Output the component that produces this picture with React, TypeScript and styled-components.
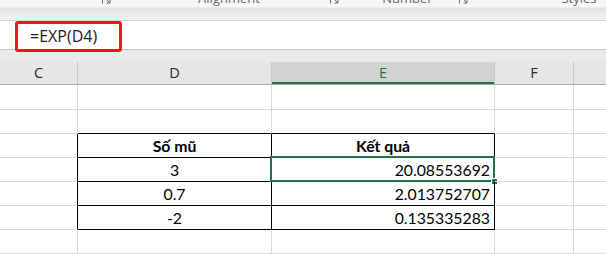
import styled, { createGlobalStyle } from "styled-components";

const GlobalStyle = createGlobalStyle`
  html, body {
    margin: 0;
    padding: 0;
    background: #ffffff;
  }
  body {
    width: 606px;
    height: 254px;
    overflow: hidden;
  }
`;

const GREEN = "#217346";
const GRID = "#d9d9d9";
const INK = "#000000";

type Column = { name: string; width: number };

const columns: Column[] = [
  { name: "C", width: 78 },
  { name: "D", width: 194 },
  { name: "E", width: 223 },
  { name: "F", width: 79 },
  { name: "", width: 80 },
];

const selectedCol = 2;

type Row = { height: number; cells: string[]; bold?: boolean };

const rows: Row[] = [
  { height: 25, cells: [] },
  { height: 24, cells: [] },
  { height: 24, cells: ["", "Số mũ", "Kết quả"], bold: true },
  { height: 24, cells: ["", "3", "20.08553692"] },
  { height: 24, cells: ["", "0.7", "2.013752707"] },
  { height: 24, cells: ["", "-2", "0.135335283"] },
  { height: 24, cells: [] },
];

// table D3:E6 has thin black borders all round
const inTable = (r: number, c: number) => r >= 2 && r <= 5 && c >= 1 && c <= 2;

const ribbonGroups = [
  { label: "", width: 115 },
  { label: "Alignment", width: 228 },
  { label: "Number", width: 129 },
  { label: "Styles", width: 214 },
];

const Sheet = styled.div`
  width: 606px;
  height: 254px;
  overflow: hidden;
  position: relative;
  font-family: "Open Sans", "Noto Sans", sans-serif;
`;

const Ribbon = styled.div`
  height: 20px;
  border-bottom: 1px solid #d4d4d4;
  background: linear-gradient(
    to bottom,
    #f6f6f6 0px,
    #f6f6f6 7px,
    #e2e2e2 8px,
    #eaeaea 14px,
    #f1f1f1 20px
  );
  display: grid;
  grid-template-columns: ${ribbonGroups.map((g) => `${g.width}px`).join(" ")};
  overflow: hidden;
`;

const RibbonGroup = styled.div`
  position: relative;
  height: 7px;
  overflow: hidden;
  display: flex;
  justify-content: center;
  align-items: flex-end;
`;

const GroupLabel = styled.span`
  font-size: 13px;
  line-height: 16px;
  color: #6a6a6a;
  margin-bottom: 1px;
  white-space: nowrap;
`;

const Launcher = styled.svg`
  position: absolute;
  right: 4px;
  bottom: 3px;
`;

const FormulaBar = styled.div`
  position: relative;
  height: 28px;
  background: #ffffff;
  border-bottom: 1px solid #c6c6c6;
  display: flex;
  align-items: center;
  padding-left: 30px;
`;

const FormulaText = styled.span`
  font-size: 16px;
  color: #222222;
  line-height: 20px;
  margin-top: 2px;
`;

const Callout = styled.div`
  position: absolute;
  left: 15px;
  top: 0px;
  width: 107px;
  height: 31px;
  box-sizing: border-box;
  border: 3px solid #f0141c;
  border-radius: 3px;
`;

const Gap = styled.div`
  height: 12px;
  background: #e9e9e9;
`;

const GridRow = styled.div`
  display: flex;
`;

const HeaderCell = styled.div<{ $w: number; $active?: boolean }>`
  width: ${(p) => p.$w}px;
  flex: none;
  height: 23px;
  box-sizing: border-box;
  border-right: 1px solid #c8c8c8;
  border-bottom: 1px solid #ababab;
  background: ${(p) => (p.$active ? "#d2d2d2" : "#e6e6e6")};
  color: ${(p) => (p.$active ? GREEN : "#262626")};
  box-shadow: ${(p) => (p.$active ? `inset 0 -2px 0 ${GREEN}` : "none")};
  font-size: 14.5px;
  line-height: 22px;
  text-align: center;
`;

const Cell = styled.div<{
  $w: number;
  $h: number;
  $right: string;
  $bottom: string;
  $align: "center" | "right";
  $bold?: boolean;
}>`
  position: relative;
  width: ${(p) => p.$w}px;
  height: ${(p) => p.$h}px;
  flex: none;
  box-sizing: border-box;
  border-right: 1px solid ${(p) => p.$right};
  border-bottom: 1px solid ${(p) => p.$bottom};
  display: flex;
  align-items: flex-end;
  justify-content: ${(p) => (p.$align === "right" ? "flex-end" : "center")};
  padding: 0 4px 2px 4px;
  font-family: "Lato", "Carlito", sans-serif;
  font-size: 15.8px;
  font-weight: ${(p) => (p.$bold ? 700 : 400)};
  line-height: 18px;
  color: #000000;
`;

const Selection = styled.span`
  position: absolute;
  left: -2px;
  top: -2px;
  right: -1px;
  bottom: -1px;
  border: 2px solid ${GREEN};
  pointer-events: none;

  &::after {
    content: "";
    position: absolute;
    right: -4px;
    bottom: -4px;
    width: 5px;
    height: 5px;
    background: ${GREEN};
    border: 1px solid #ffffff;
    border-right: none;
    border-bottom: none;
  }
`;

const LauncherIcon = () => (
  <Launcher width="9" height="9" viewBox="0 0 9 9">
    <path d="M0.5 8.5V0.5H8.5" fill="none" stroke="#6a6a6a" strokeWidth="1" />
    <path d="M3 3L8 8M8 4.5V8H4.5" fill="none" stroke="#6a6a6a" strokeWidth="1" />
  </Launcher>
);

export default function App() {
  return (
    <Sheet>
      <GlobalStyle />
      <Ribbon>
        {ribbonGroups.map((g, i) => (
          <RibbonGroup key={i}>
            {g.label && <GroupLabel>{g.label}</GroupLabel>}
            <LauncherIcon />
          </RibbonGroup>
        ))}
      </Ribbon>

      <FormulaBar>
        <FormulaText>=EXP(D4)</FormulaText>
        <Callout />
      </FormulaBar>

      <Gap />

      <GridRow>
        {columns.map((col, c) => (
          <HeaderCell key={c} $w={col.width} $active={c === selectedCol}>
            {col.name}
          </HeaderCell>
        ))}
      </GridRow>

      {rows.map((row, r) => (
        <GridRow key={r}>
          {columns.map((col, c) => {
            const right = inTable(r, c) || inTable(r, c + 1) ? INK : GRID;
            const bottom = inTable(r, c) || inTable(r + 1, c) ? INK : GRID;
            const text = row.cells[c] ?? "";
            const numeric = !row.bold && c === 2;
            return (
              <Cell
                key={c}
                $w={col.width}
                $h={row.height}
                $right={right}
                $bottom={bottom}
                $align={numeric ? "right" : "center"}
                $bold={row.bold}
              >
                {text}
                {r === 3 && c === selectedCol && <Selection />}
              </Cell>
            );
          })}
        </GridRow>
      ))}
    </Sheet>
  );
}
